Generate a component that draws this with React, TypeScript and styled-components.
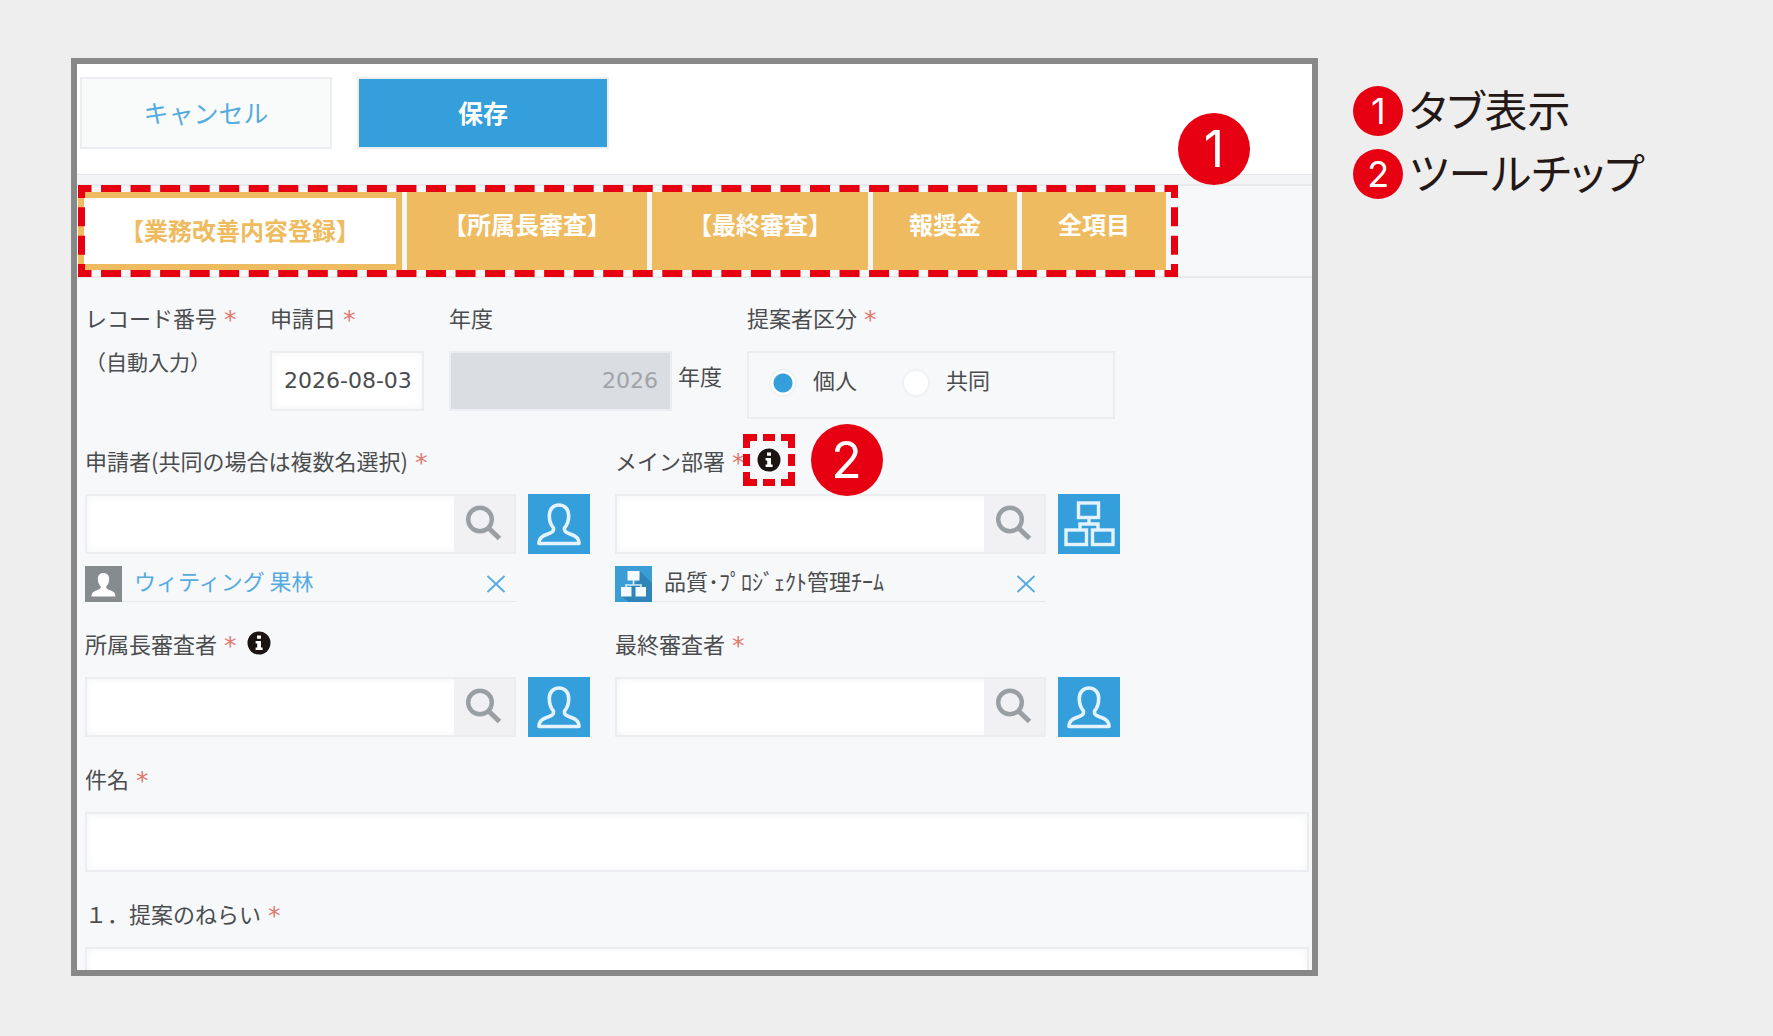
import React, { useState } from "react";
import styled, { createGlobalStyle, css } from "styled-components";

const color = {
  page: "#eeeeee",
  frame: "#888888",
  form: "#f7f8fa",
  line: "#ebedf0",
  blue: "#349fdb",
  link: "#55abe0",
  orange: "#efbb60",
  red: "#e60012",
  text: "#4a4c4e",
  ink: "#231815",
};

const GlobalStyle = createGlobalStyle`
  *, *::before, *::after { box-sizing: border-box; }
  body {
    margin: 0;
    background: ${color.page};
    color: ${color.text};
    font-family: "Noto Sans CJK JP", "Noto Sans", sans-serif;
    font-size: 22px;
    line-height: 32px;
  }
  button, input, textarea { font: inherit; color: inherit; margin: 0; }
  button { cursor: pointer; padding: 0; }
`;

const Page = styled.main`
  display: grid;
  grid-template-columns: minmax(0, 3fr) minmax(0, 1fr);
  gap: 35px;
  height: 100vh;
  padding: 58px 4px 60px 71px;
`;

const Frame = styled.section`
  display: flex;
  flex-direction: column;
  min-height: 0;
  overflow: hidden;
  border: 6px solid ${color.frame};
  background: ${color.form};
`;

const ActionBar = styled.header`
  display: flex;
  gap: 25px;
  padding: 13px 3px 25px;
  background: #ffffff;
  border-bottom: 1px solid #e6e8eb;
`;

const ActionButton = styled.button<{ $primary?: boolean }>`
  width: 252px;
  height: 72px;
  padding-bottom: 2px;
  border: 2px solid ${color.line};
  background: #f9fafa;
  color: ${color.link};
  font-size: 25px;
  ${(p) =>
    p.$primary &&
    css`
      background: ${color.blue};
      background-clip: padding-box;
      color: #ffffff;
      font-weight: 700;
    `}
`;

const TabBar = styled.nav`
  margin-top: 9px;
  padding-left: 1px;
  border-top: 2px solid #e8eaec;
  border-bottom: 2px solid #e8eaec;
  box-shadow: 0 -9px 0 #f3f4f6;
  display: flex;
`;

const TabHighlight = styled.div`
  position: relative;
  padding: 6px 12px 6px 0;
`;

const TabList = styled.div`
  display: flex;
  gap: 5px;
  background: #f7f6f3;
`;

const Tab = styled.button<{ $active?: boolean }>`
  display: flex;
  align-items: flex-start;
  padding: 20px 36px 22px;
  border: 0;
  background: ${color.orange};
  color: #ffffff;
  font-size: 24px;
  font-weight: 700;
  line-height: 24px;
  white-space: nowrap;
  ${(p) =>
    p.$active &&
    css`
      border: 6px solid ${color.orange};
      background: #ffffff;
      color: ${color.orange};
    `}
`;

const DashedSvg = styled.svg<{ $outset: number }>`
  position: absolute;
  left: 0;
  top: ${(p) => -p.$outset}px;
  width: 100%;
  height: calc(100% + ${(p) => p.$outset * 2}px);
  overflow: visible;
  pointer-events: none;
  stroke: ${color.red};
  stroke-width: 7;
`;

const Badge = styled.span<{ $small?: boolean }>`
  display: inline-flex;
  flex: none;
  align-items: center;
  justify-content: center;
  width: ${(p) => (p.$small ? 50 : 72)}px;
  height: ${(p) => (p.$small ? 50 : 72)}px;
  border-radius: 50%;
  background: ${color.red};
  color: #ffffff;
  font-family: Inter, "Liberation Sans", sans-serif;
  font-size: ${(p) => (p.$small ? 36 : 50)}px;
  line-height: 1;
`;

const TabBadge = styled(Badge)`
  position: absolute;
  left: 100%;
  top: -73px;
`;

const TipBadge = styled(Badge)`
  position: absolute;
  left: 68px;
  top: -10px;
  z-index: 1;
`;

const Form = styled.form`
  display: flex;
  flex-direction: column;
  gap: 27px;
  padding: 25px 3px 0 8px;
`;

const Row = styled.div`
  display: flex;
  gap: 25px;
`;

const Field = styled.div<{ $width?: number }>`
  display: flex;
  flex-direction: column;
  gap: 16px;
  ${(p) => (p.$width ? `width: ${p.$width}px;` : "")}
`;

const LabelLine = styled.div`
  display: flex;
  align-items: center;
  height: 32px;
  padding-bottom: 4px;
  white-space: nowrap;
`;

const Required = styled.span`
  margin-left: 7px;
  padding-top: 6px;
  color: #df7a70;
  font-family: "DejaVu Sans", sans-serif;
  font-size: 25px;
`;

const AutoValue = styled.div`
  font-size: 21px;
  line-height: 20px;
  white-space: nowrap;
`;

const inputBox = css`
  height: 60px;
  border: 2px solid ${color.line};
  border-radius: 0;
  outline: none;
  background: #ffffff;
  box-shadow: inset 0 0 8px #f3f4f5;
`;

const DateInput = styled.input`
  ${inputBox}
  width: 154px;
  padding: 0 0 2px 12px;
  font-family: "DejaVu Sans", sans-serif;
`;

const YearLine = styled.div`
  display: flex;
  gap: 6px;
`;

const YearInput = styled.input`
  ${inputBox}
  width: 223px;
  padding: 0 12px 2px;
  background: #dadde1;
  box-shadow: none;
  color: #a0a4a9;
  font-family: "DejaVu Sans", sans-serif;
  text-align: right;
`;

const Suffix = styled.span`
  line-height: 48px;
`;

const RadioGroup = styled.div`
  display: flex;
  gap: 45px;
  width: 368px;
  padding: 16px 20px 20px;
  border: 2px solid ${color.line};
`;

const RadioLabel = styled.label`
  display: flex;
  gap: 16px;
  height: 28px;
  line-height: 20px;
`;

const Radio = styled.input`
  appearance: none;
  width: 28px;
  height: 28px;
  border: 2px solid #f0f1f3;
  border-radius: 50%;
  background: #ffffff;
  &:checked {
    background: radial-gradient(circle, ${color.blue} 9px, #ffffff 10px);
  }
`;

const LookupLine = styled.div`
  display: flex;
  gap: 12px;
`;

const SearchBox = styled.div`
  ${inputBox}
  display: flex;
  width: 431px;
`;

const SearchInput = styled.input`
  flex: 1;
  min-width: 0;
  padding: 0 12px;
  border: 0;
  outline: none;
  background: transparent;
`;

const SearchButton = styled.button`
  width: 60px;
  border: 0;
  background: #f1f1f4;
`;

const PickButton = styled.button`
  width: 62px;
  height: 60px;
  border: 0;
  background: ${color.blue};
`;

const Glyph = styled.svg`
  display: block;
`;

const Lookup = styled.div`
  display: flex;
  flex-direction: column;
  gap: 12px;
`;

const Chip = styled.div`
  display: flex;
  align-items: center;
  width: 431px;
  height: 36px;
  border-bottom: 1px solid #e6e8eb;
`;

const ChipIcon = styled.span<{ $bg: string }>`
  width: 37px;
  height: 36px;
  margin-right: 12px;
  background: ${(p) => p.$bg};
`;

const chipText = css`
  flex: 1;
  padding-bottom: 8px;
  line-height: 28px;
`;

const ChipLink = styled.a`
  ${chipText}
  color: ${color.link};
  text-decoration: none;
`;

const ChipText = styled.span`
  ${chipText}
`;

const RemoveButton = styled.button`
  margin-right: 10px;
  border: 0;
  background: none;
`;

const TipButton = styled.button`
  margin-left: 10px;
  border: 0;
  background: none;
`;

const TipHighlight = styled.span`
  position: relative;
  display: flex;
  align-items: center;
  justify-content: center;
  width: 52px;
  height: 52px;
  margin-left: -2px;
  ${TipButton} {
    margin-left: 0;
  }
`;

const TextInput = styled.input`
  ${inputBox}
  width: 100%;
  padding: 0 12px;
`;

const TextArea = styled.textarea`
  ${inputBox}
  width: 100%;
  height: 160px;
  padding: 12px;
  resize: none;
`;

const Legend = styled.ol`
  display: flex;
  flex-direction: column;
  gap: 13px;
  margin: 0;
  padding: 28px 0 0;
  list-style: none;
`;

const LegendItem = styled.li`
  display: flex;
  gap: 6px;
  height: 50px;
  color: ${color.ink};
  font-size: 43px;
  line-height: 44px;
  font-feature-settings: "palt";
  white-space: nowrap;
`;

const SearchGlyph = () => (
  <Glyph width="60" height="56" viewBox="0 0 60 56" fill="none" stroke="#9a9fa3">
    <circle cx="26" cy="23.5" r="11.8" strokeWidth="4.4" />
    <path d="M34.5 32 45.5 42.5" strokeWidth="5" />
  </Glyph>
);

const personPath =
  "M30.5 11C24.5 11 20.8 15.5 20.8 21.5C20.8 27 22.3 31 25 34C25.6 37.5 23.5 38.6 19.5 40C13.5 42 10.5 44 10.5 49.5H50.5C50.5 44 47.5 42 41.5 40C37.5 38.6 35.4 37.5 36 34C38.7 31 40.2 27 40.2 21.5C40.2 15.5 36.5 11 30.5 11Z";

const PersonGlyph = () => (
  <Glyph width="62" height="60" viewBox="0 0 61 60" fill="none" stroke="#e4f3fd" strokeWidth="3.6" strokeLinejoin="round">
    <path d={personPath} />
  </Glyph>
);

const OrgGlyph = () => (
  <Glyph width="62" height="60" viewBox="0 0 61 60" fill="none" stroke="#e4f3fd" strokeWidth="3.4">
    <rect x="20" y="9" width="20" height="14.5" />
    <path d="M30.5 24V30M21.5 35V30H39.5V35" />
    <rect x="7.5" y="36" width="20.5" height="14.5" />
    <rect x="34" y="36" width="20.5" height="14.5" />
  </Glyph>
);

const PersonChipGlyph = () => (
  <Glyph width="37" height="36" viewBox="0 0 37 36" fill="#ffffff">
    <path d="M18.5 7C14.8 7 12.8 9.6 12.8 13C12.8 16.4 14 18.6 15.8 20.4C16 22.6 14.6 23.2 12 24.2C8.2 25.6 6.5 26.8 6.5 30.5H30.5C30.5 26.8 28.8 25.6 25 24.2C22.4 23.2 21 22.6 21.2 20.4C23 18.6 24.2 16.4 24.2 13C24.2 9.6 22.2 7 18.5 7Z" />
  </Glyph>
);

const OrgChipGlyph = () => (
  <Glyph width="37" height="36" viewBox="0 0 37 36">
    <path d="M25 5 37 17V36H14L6 30 24 14Z" fill="#2f84b8" />
    <path d="M18.5 14V19M11 22V19H26V22" fill="none" stroke="#d8ecf8" strokeWidth="1.6" />
    <path d="M12.5 5H24.5V14.5H12.5ZM6 21H16.5V30.5H6ZM20.5 21H31V30.5H20.5Z" fill="#f4fafe" />
  </Glyph>
);

const CrossGlyph = () => (
  <Glyph width="20" height="18" viewBox="0 0 20 18" stroke={color.link} strokeWidth="1.8">
    <path d="M1.5 1 18.5 17M18.5 1 1.5 17" />
  </Glyph>
);

const InfoGlyph = () => (
  <Glyph width="24" height="24" viewBox="0 0 24 24">
    <circle cx="12" cy="12" r="11.5" fill="#1a1412" />
    <path d="M10 4.5H14V7.8H10ZM8.6 10H14V16.6H15.6V19H8.6V16.6H10.2V12.4H8.6Z" fill="#ffffff" />
  </Glyph>
);

type Dash = { pattern: string; offset: number };

function DashedOutline({ x, y, outset = 0, width, height }: { x: Dash; y: Dash; outset?: number; width: number; height: number }) {
  return (
    <DashedSvg $outset={outset} aria-hidden="true">
      <g strokeDasharray={x.pattern} strokeDashoffset={x.offset}>
        <path d={`M0 3.5H${width}`} />
        <path d={`M0 ${height - 3.5}H${width}`} />
      </g>
      <g strokeDasharray={y.pattern} strokeDashoffset={y.offset}>
        <path d={`M3.5 0V${height}`} />
        <path d={`M${width - 3.5} 0V${height}`} />
      </g>
    </DashedSvg>
  );
}

function LookupField({ id, label, org, tip, children }: { id: string; label: string; org?: boolean; tip?: React.ReactNode; children?: React.ReactNode }) {
  return (
    <Field>
      <LabelLine>
        <label htmlFor={id}>{label}</label>
        <Required>*</Required>
        {tip}
      </LabelLine>
      <Lookup>
        <LookupLine>
          <SearchBox>
            <SearchInput id={id} type="text" />
            <SearchButton type="button" aria-label="検索">
              <SearchGlyph />
            </SearchButton>
          </SearchBox>
          <PickButton type="button" aria-label={org ? "組織を選択" : "ユーザーを選択"}>
            {org ? <OrgGlyph /> : <PersonGlyph />}
          </PickButton>
        </LookupLine>
        {children}
      </Lookup>
    </Field>
  );
}

const Tip = () => (
  <TipButton type="button" aria-label="説明">
    <InfoGlyph />
  </TipButton>
);

const tabs = ["【業務改善内容登録】", "【所属長審査】", "【最終審査】", "報奨金", "全項目"];

export default function App() {
  const [active, setActive] = useState(0);
  const [kind, setKind] = useState("個人");

  return (
    <>
      <GlobalStyle />
      <Page>
        <Frame>
          <ActionBar>
            <ActionButton type="button">キャンセル</ActionButton>
            <ActionButton type="button" $primary>
              保存
            </ActionButton>
          </ActionBar>
          <TabBar>
            <TabHighlight>
              <TabList role="tablist">
                {tabs.map((name, i) => (
                  <Tab key={name} type="button" role="tab" aria-selected={i === active} $active={i === active} onClick={() => setActive(i)}>
                    {name}
                  </Tab>
                ))}
              </TabList>
              <DashedOutline width={1100} height={92} outset={1} x={{ pattern: "20 9.54", offset: 6.5 }} y={{ pattern: "19 9.33", offset: 6 }} />
              <TabBadge>1</TabBadge>
            </TabHighlight>
          </TabBar>
          <Form>
            <Row>
              <Field $width={160}>
                <LabelLine>
                  レコード番号<Required>*</Required>
                </LabelLine>
                <AutoValue>（自動入力）</AutoValue>
              </Field>
              <Field>
                <LabelLine>
                  <label htmlFor="date">申請日</label>
                  <Required>*</Required>
                </LabelLine>
                <DateInput id="date" type="text" defaultValue="2026-08-03" />
              </Field>
              <Field>
                <LabelLine>
                  <label htmlFor="year">年度</label>
                </LabelLine>
                <YearLine>
                  <YearInput id="year" type="text" value="2026" disabled />
                  <Suffix>年度</Suffix>
                </YearLine>
              </Field>
              <Field>
                <LabelLine id="kind">
                  提案者区分<Required>*</Required>
                </LabelLine>
                <RadioGroup role="radiogroup" aria-labelledby="kind">
                  {["個人", "共同"].map((k) => (
                    <RadioLabel key={k}>
                      <Radio type="radio" name="kind" checked={kind === k} onChange={() => setKind(k)} />
                      {k}
                    </RadioLabel>
                  ))}
                </RadioGroup>
              </Field>
            </Row>
            <Row>
              <LookupField id="applicant" label="申請者(共同の場合は複数名選択)">
                <Chip>
                  <ChipIcon $bg="#868b8e">
                    <PersonChipGlyph />
                  </ChipIcon>
                  <ChipLink href="#user">ウィティング 果林</ChipLink>
                  <RemoveButton type="button" aria-label="削除">
                    <CrossGlyph />
                  </RemoveButton>
                </Chip>
              </LookupField>
              <LookupField
                id="department"
                label="メイン部署"
                org
                tip={
                  <TipHighlight>
                    <Tip />
                    <DashedOutline width={52} height={52} x={{ pattern: "14 6 12 6 14", offset: 0 }} y={{ pattern: "14 6 12 6 14", offset: 0 }} />
                    <TipBadge>2</TipBadge>
                  </TipHighlight>
                }
              >
                <Chip>
                  <ChipIcon $bg="#3a9dd6">
                    <OrgChipGlyph />
                  </ChipIcon>
                  <ChipText>品質･ﾌﾟﾛｼﾞｪｸﾄ管理ﾁｰﾑ</ChipText>
                  <RemoveButton type="button" aria-label="削除">
                    <CrossGlyph />
                  </RemoveButton>
                </Chip>
              </LookupField>
            </Row>
            <Row>
              <LookupField id="manager" label="所属長審査者" tip={<Tip />} />
              <LookupField id="final" label="最終審査者" />
            </Row>
            <Field>
              <LabelLine>
                <label htmlFor="subject">件名</label>
                <Required>*</Required>
              </LabelLine>
              <TextInput id="subject" type="text" />
            </Field>
            <Field>
              <LabelLine>
                <label htmlFor="aim">１．提案のねらい</label>
                <Required>*</Required>
              </LabelLine>
              <TextArea id="aim" />
            </Field>
          </Form>
        </Frame>
        <Legend>
          <LegendItem>
            <Badge $small>1</Badge>タブ表示
          </LegendItem>
          <LegendItem>
            <Badge $small>2</Badge>ツールチップ
          </LegendItem>
        </Legend>
      </Page>
    </>
  );
}
